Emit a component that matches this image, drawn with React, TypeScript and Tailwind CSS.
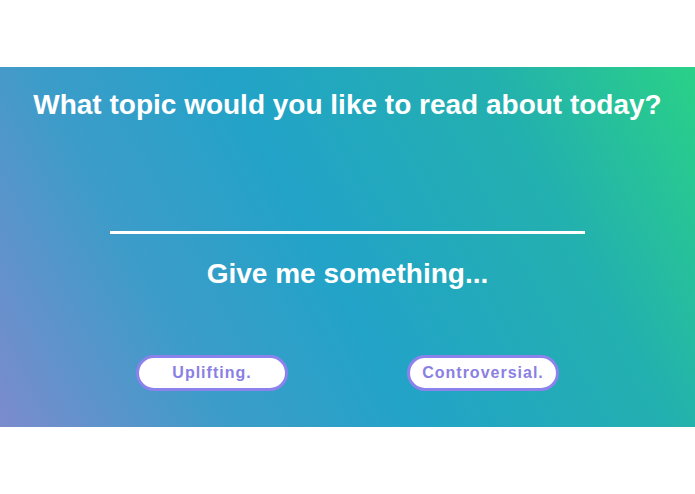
import { useState } from 'react'

const choices = ['Uplifting.', 'Controversial.']

export default function App() {
	const [topic, setTopic] = useState('')

	return (
		<div className="w-[695px] h-[494px] bg-white flex flex-col justify-center font-['Liberation_Sans',Arial,sans-serif]">
			<section className="h-[360px] bg-[linear-gradient(62deg,#7c8bcd_0%,#3d9cc9_25%,#22a3c8_47%,#23b0af_76%,#2ad187_100%)] flex flex-col items-center text-white">
				<h1 className="mt-[22px] text-[28px] leading-[32px] font-bold">What topic would you like to read about today?</h1>

				<input
					value={topic}
					onChange={(e) => setTopic(e.target.value)}
					className="mt-[79px] w-[475px] h-[34px] bg-transparent border-b-[3px] border-white outline-none text-white text-xl text-center"
				/>

				<h2 className="mt-[24px] text-[28px] leading-[32px] font-bold">Give me something...</h2>

				<div className="mt-[65px] flex gap-[119px]">
					{choices.map((c) => (
						<button
							key={c}
							onClick={() => setTopic(c)}
							className="w-[152px] h-[36px] rounded-full bg-white border-[3px] border-[#8c82ec] text-[#8a7fe3] text-base font-bold tracking-[1px]"
						>
							{c}
						</button>
					))}
				</div>
			</section>
		</div>
	)
}
